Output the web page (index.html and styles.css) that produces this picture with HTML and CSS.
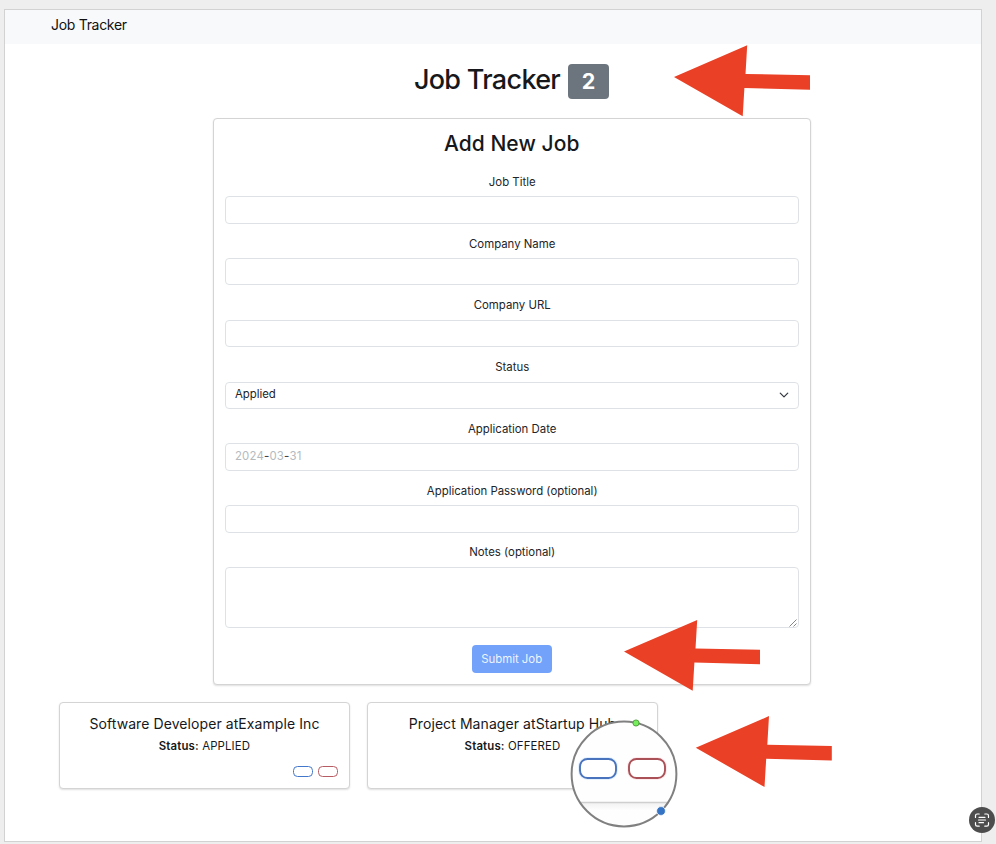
FILE: index.html
```html
<!DOCTYPE html>
<html lang="en">
<head>
<meta charset="utf-8">
<title>Job Tracker</title>
<link rel="stylesheet" href="styles.css">
</head>
<body>
<div class="window">
  <nav class="navbar"><span class="brand">Job Tracker</span></nav>
  <main class="main">
    <h1 class="title"><span class="title-text">Job Tracker</span><span class="badge">2</span></h1>
    <form class="card form">
      <h2 class="form-title">Add New Job</h2>
      <div class="field"><label class="label">Job Title</label><div class="input"></div></div>
      <div class="field"><label class="label">Company Name</label><div class="input"></div></div>
      <div class="field"><label class="label">Company URL</label><div class="input"></div></div>
      <div class="field"><label class="label">Status</label>
        <div class="input select"><span>Applied</span>
          <svg class="chevron" viewBox="0 0 16 16"><path d="m2 5 6 6 6-6" fill="none" stroke="#343a40" stroke-width="2" stroke-linecap="round" stroke-linejoin="round"/></svg>
        </div></div>
      <div class="field"><label class="label">Application Date</label><div class="input date"><span>2024<b>-</b>03<b>-</b>31</span></div></div>
      <div class="field"><label class="label">Application Password (optional)</label><div class="input"></div></div>
      <div class="field"><label class="label">Notes (optional)</label>
        <div class="input notes"><svg class="grip" viewBox="0 0 8 8"><path d="M.5 7.5l7-7M4.5 7.5l3-3" stroke="#777" stroke-width=".9"/></svg></div></div>
      <button class="submit" type="button">Submit Job</button>
    </form>
    <section class="jobs">
      <article class="card job">
        <h3 class="job-title">Software Developer atExample Inc</h3>
        <p class="status"><b>Status:</b> APPLIED</p>
        <div class="actions"><span class="pill blue"></span><span class="pill red"></span></div>
      </article>
      <article class="card job">
        <h3 class="job-title">Project Manager atStartup Hub</h3>
        <p class="status"><b>Status:</b> OFFERED</p>
        <div class="actions"><span class="pill blue"></span><span class="pill red"></span></div>
      </article>
    </section>
  </main>
</div>
<svg class="overlay" viewBox="0 0 996 844">
  <defs>
    <path id="arrow" fill="#ea4025" d="M674 77L747.2 45.3 745.5 74 810 75.2V89.7L744.4 88 742.7 116.2Z"/>
    <clipPath id="lens"><circle cx="624" cy="774" r="52"/></clipPath>
    <linearGradient id="shade" x1="0" y1="0" x2="0" y2="1"><stop stop-color="#f1f1f1"/><stop offset="1" stop-color="#fff"/></linearGradient>
  </defs>
  <use href="#arrow"/>
  <use href="#arrow" x="-50" y="574.6"/>
  <use href="#arrow" x="21.8" y="670.8"/>
  <circle cx="624" cy="774" r="52.5" fill="#fefefe"/>
  <g clip-path="url(#lens)">
    <path d="M570 802.5H678V811H570Z" fill="url(#shade)"/>
    <path d="M570 802.5H678" stroke="#cfcfcf" stroke-width="1.3"/>
  </g>
  <rect x="580" y="759" width="36" height="19" rx="7.5" fill="#fff" stroke="#e3f1ff" stroke-width="4"/>
  <rect x="580" y="759" width="36" height="19" rx="7.5" fill="#fff" stroke="#4974bd" stroke-width="1.9"/>
  <rect x="629" y="759" width="36" height="19" rx="7.5" fill="#fff" stroke="#ffebed" stroke-width="4"/>
  <rect x="629" y="759" width="36" height="19" rx="7.5" fill="#fff" stroke="#aa5057" stroke-width="1.9"/>
  <circle cx="624" cy="774" r="52.4" fill="none" stroke="#808080" stroke-width="2"/>
  <circle cx="636" cy="723" r="3.1" fill="#76ed5c" stroke="#3f8f2c" stroke-width=".8"/>
  <circle cx="661" cy="811" r="4.4" fill="#3573c5" stroke="#fff" stroke-width=".7"/>
  <circle cx="982" cy="820" r="13" fill="#4d4d4d"/>
  <g fill="none" stroke="#fff" stroke-width="1.2" stroke-linecap="round">
    <path d="M975.5 817.5v-1.8q0-1.7 1.7-1.7h2M984.8 814h2q1.7 0 1.7 1.7v1.8M988.5 822.7v1.8q0 1.7-1.7 1.7h-2M979.2 826.2h-2q-1.7 0-1.7-1.7v-1.8"/>
    <path d="M979 817.3h6M978.5 820h7M979 822.7h4.5"/>
  </g>
</svg>
</body>
</html>
```
FILE: styles.css
```css
* { box-sizing: border-box; }
body { margin: 0; padding: 9px 14px 2px 4px; height: 844px; background: #eeeeee; color: #212529; font-family: Inter, "Liberation Sans", sans-serif; font-size: 11.4px; line-height: 17.2px; overflow: hidden; }
h1, h2, h3, p { margin: 0; font-weight: 450; color: #16181b; }
.window { height: 833px; border: 1px solid #d2d2d2; background: #fff; }
.navbar { height: 34px; padding: 4px 0 0 46px; background: #f8f9fb; }
.brand { font-size: 14px; line-height: 21px; letter-spacing: -.3px; color: #111; }
.main { display: flex; flex-direction: column; align-items: center; padding-left: 37px; }
.title { display: flex; align-items: center; gap: 8px; height: 35px; margin-top: 20px; font-size: 27px; line-height: 34px; letter-spacing: -.7px; }
.title-text { padding-bottom: 3px; }
.badge { display: flex; align-items: center; justify-content: center; width: 41px; height: 35px; padding-bottom: 1px; border-radius: 4px; background: #6c757d; color: #fff; font-size: 21.5px; font-weight: 700; letter-spacing: 0; }
.card { border: 1px solid #d4d4d4; border-radius: 4px; background: #fff; box-shadow: 0 1px 2px rgba(0, 0, 0, .13); }
.form { width: 598px; height: 567.4px; margin-top: 18.6px; padding: 10.4px 11px 11px 11.4px; text-align: center; }
.form-title { height: 44.8px; font-size: 21px; line-height: 29px; letter-spacing: .05px; }
.field { margin-bottom: 11.4px; }
.label { display: block; margin-bottom: 5.2px; padding-left: 1px; }
.field:not(:last-of-type) { margin-bottom: 11.9px; }
.input { display: flex; align-items: center; height: 27.5px; padding: 0 9px; border: 1px solid #dee2e6; border-radius: 4px; background: #fff; }
.select { justify-content: space-between; padding-bottom: 1px; }
.chevron { width: 10px; height: 10px; }
.date { color: #b5babe; letter-spacing: .2px; padding-bottom: 1px; }
.date b { color: #444; font-weight: 500; }
.notes { height: 61.5px; padding: 0; align-items: flex-end; justify-content: flex-end; }
.grip { width: 8px; height: 8px; margin: 0 1px 0 0; }
.submit { display: block; width: 80px; height: 28px; margin: 17px auto 0; padding: 0; border: 0; border-radius: 4px; background: #73a2fb; color: #eef4ff; font: inherit; }
.jobs { display: flex; gap: 17px; width: 100%; margin-top: 17px; padding-left: 17px; }
.job { width: 291px; height: 87px; padding: 11px; text-align: center; }
.job-title { height: 24px; font-size: 14px; font-weight: 400; line-height: 20px; letter-spacing: .08px; }
.status { font-weight: 400; letter-spacing: .15px; }
.status b { font-weight: 600; }
.actions { display: flex; justify-content: flex-end; gap: 5px; margin-top: 11px; }
.pill { width: 20px; height: 11px; border: 1px solid; border-radius: 4.5px; }
.blue { border-color: #4377cc; }
.red { border-color: #b85c63; }
.overlay { position: absolute; left: 0; top: 0; width: 996px; height: 844px; pointer-events: none; }
```
